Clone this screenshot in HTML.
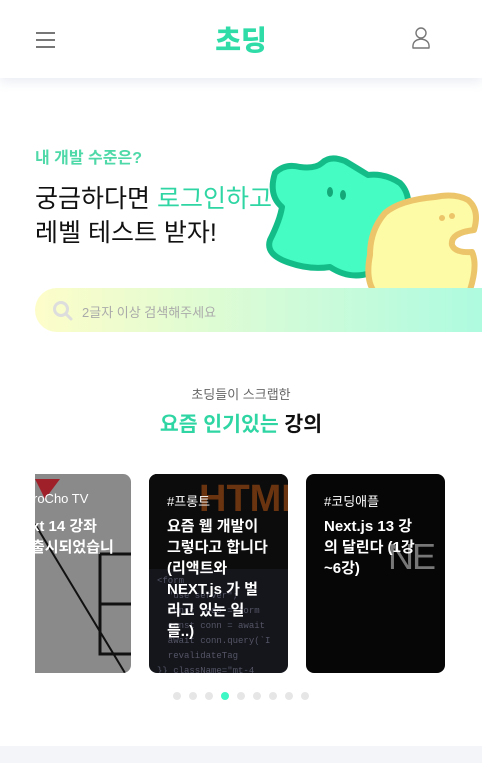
<!DOCTYPE html>
<html><head><meta charset="utf-8"><style>
*{margin:0;padding:0;box-sizing:border-box}
body{width:482px;height:763px;overflow:hidden;background:#fff;font-family:"Liberation Sans","Noto Sans CJK KR",sans-serif;position:relative}
.hdr{position:absolute;left:0;top:0;width:482px;height:78px;background:#fff;box-shadow:0 4px 10px rgba(220,225,235,.6);z-index:5}
.abs{position:absolute}
.card{position:absolute;top:474px;width:139px;height:199px;border-radius:8px;overflow:hidden;color:#fff}
.card .tag{position:absolute;left:18px;top:17px;font-size:13px}
.card .tt{position:absolute;left:18px;top:42px;font-size:15px;font-weight:bold;line-height:21px;width:108px;word-break:break-all}
.dot{position:absolute;top:692px;width:8px;height:8px;border-radius:50%;background:#e6e6e6}
</style></head><body>
<div class="hdr">
 <div class="abs" style="left:36px;top:32px;width:19px;height:2px;background:#777"></div>
 <div class="abs" style="left:36px;top:39px;width:19px;height:2px;background:#777"></div>
 <div class="abs" style="left:36px;top:46px;width:19px;height:2px;background:#777"></div>
 <div class="abs" style="left:0;width:482px;top:19px;text-align:center;font-size:28px;font-weight:900;color:#2fdca8;letter-spacing:0px">초딩</div>
 <svg class="abs" style="left:411px;top:26px" width="20" height="24" viewBox="0 0 20 24"><circle cx="10" cy="7" r="5" fill="none" stroke="#777" stroke-width="1.4"/><path d="M2 22 Q1 14 10 13 Q19 14 18 22 Z" fill="none" stroke="#777" stroke-width="1.4" stroke-linejoin="round"/></svg>
</div>
<svg class="abs" style="left:260px;top:155px" width="222" height="155" viewBox="0 0 222 155">
 <path d="M15 18 Q25 8 40 12 Q55 14 62 8 Q70 0 85 6 Q95 12 108 20 Q125 18 140 28 Q150 38 148 55 Q150 80 142 110 Q130 120 110 118 Q90 125 70 112 Q50 115 30 108 Q5 100 10 85 Q20 65 22 52 Q8 40 15 18 Z" fill="#45fdc3" stroke="#14bd88" stroke-width="6" stroke-linejoin="round"/>
 <ellipse cx="70" cy="37" rx="3" ry="5" fill="#14a878"/><ellipse cx="83" cy="40" rx="3" ry="5" fill="#14a878"/>
 <path d="M125 58 Q140 45 175 42 Q195 38 208 45 Q220 55 214 75 Q190 78 192 90 Q195 98 212 97 Q218 110 210 135 Q190 150 160 144 Q130 145 115 138 Q105 125 110 100 Q110 75 125 58 Z" fill="#fdfba5" stroke="#ecc56a" stroke-width="6" stroke-linejoin="round"/>
 <circle cx="182" cy="63" r="3" fill="#ecc56a"/><circle cx="192" cy="61" r="3" fill="#ecc56a"/>
</svg>
<div class="abs" style="left:35px;top:144px;font-size:16px;font-weight:bold;color:#4fd9a8">내 개발 수준은?</div>
<div class="abs" style="left:35px;top:182px;font-size:25px;line-height:34px;color:#111">궁금하다면 <span style="color:#2fd6a4;text-shadow:0 0 2px #fff,0 0 2px #fff">로그인하고</span><br>레벨 테스트 받자!</div>
<div class="abs" style="left:35px;top:288px;width:447px;height:44px;border-radius:22px 0 0 22px;background:linear-gradient(90deg,#fdfdc9,#d2fbd8 55%,#aefbe0)"></div>
<svg class="abs" style="left:52px;top:300px" width="22" height="22" viewBox="0 0 22 22"><circle cx="9" cy="9" r="6.5" fill="none" stroke="#ddd" stroke-width="3"/><path d="M14 14 L19 19" stroke="#ddd" stroke-width="3" stroke-linecap="round"/></svg>
<div class="abs" style="left:82px;top:302px;font-size:13px;color:#aaa">2글자 이상 검색해주세요</div>
<div class="abs" style="left:0;width:482px;top:384px;text-align:center;font-size:13px;color:#666">초딩들이 스크랩한</div>
<div class="abs" style="left:0;width:482px;top:407px;text-align:center;font-size:20.5px;font-weight:bold;color:#111"><span style="color:#2fd6a4">요즘 인기있는</span> 강의</div>
<div class="card" style="left:35px;width:96px;border-radius:0 8px 8px 0;background:#8a8a8a">
 <svg class="abs" style="left:0;top:0" width="96" height="199"><path d="M0 50 L90 199" stroke="#111" stroke-width="2"/><path d="M65 80 H96 M65 80 V180 H96 M65 130 H96" stroke="#111" stroke-width="3" fill="none"/><path d="M0 5 L25 5 L10 25 Z" fill="#a0202a"/></svg>
 <div class="tag" style="left:-2px">roCho TV</div>
 <div class="tt" style="left:-4px;width:120px;word-break:keep-all">xt 14 강좌<br>출시되었습니</div>
</div>
<div class="card" style="left:149px;background:#14161c">
 <div class="abs" style="left:0;top:0;width:139px;height:95px;background:#0c0c0c"></div>
 <div class="abs" style="left:50px;top:4px;font-size:38px;font-weight:900;color:#6a3410">HTML</div>
 <div class="abs" style="left:8px;top:100px;font-family:'Liberation Mono',monospace;font-size:9px;line-height:15px;color:#556">&lt;form<br>&nbsp;&nbsp;"use server";<br>&nbsp;&nbsp;const todo = form<br>&nbsp;&nbsp;const conn = await<br>&nbsp;&nbsp;await conn.query(`I<br>&nbsp;&nbsp;revalidateTag<br>}} className="mt-4 flex"&gt;<br>&nbsp;&nbsp;&lt;input</div>
 <div class="tag">#프롱트</div>
 <div class="tt">요즘 웹 개발이<br>그렇다고 합니다<br>(리액트와<br>NEXT.js 가 벌<br>리고 있는 일<br>들..)</div>
</div>
<div class="card" style="left:306px;background:#060606">
 <div class="abs" style="left:82px;top:62px;font-size:36px;color:#777;letter-spacing:-2px">NE</div>
 <div class="tag">#코딩애플</div>
 <div class="tt">Next.js 13 강<br>의 달린다 (1강<br>~6강)</div>
</div>
<div class="dot" style="left:173px"></div><div class="dot" style="left:189px"></div><div class="dot" style="left:205px"></div>
<div class="dot" style="left:221px;background:#3df7c4"></div><div class="dot" style="left:237px"></div><div class="dot" style="left:253px"></div>
<div class="dot" style="left:269px"></div><div class="dot" style="left:285px"></div><div class="dot" style="left:301px"></div>
<div class="abs" style="left:0;top:746px;width:482px;height:17px;background:#f4f5f9"></div>
</body></html>
